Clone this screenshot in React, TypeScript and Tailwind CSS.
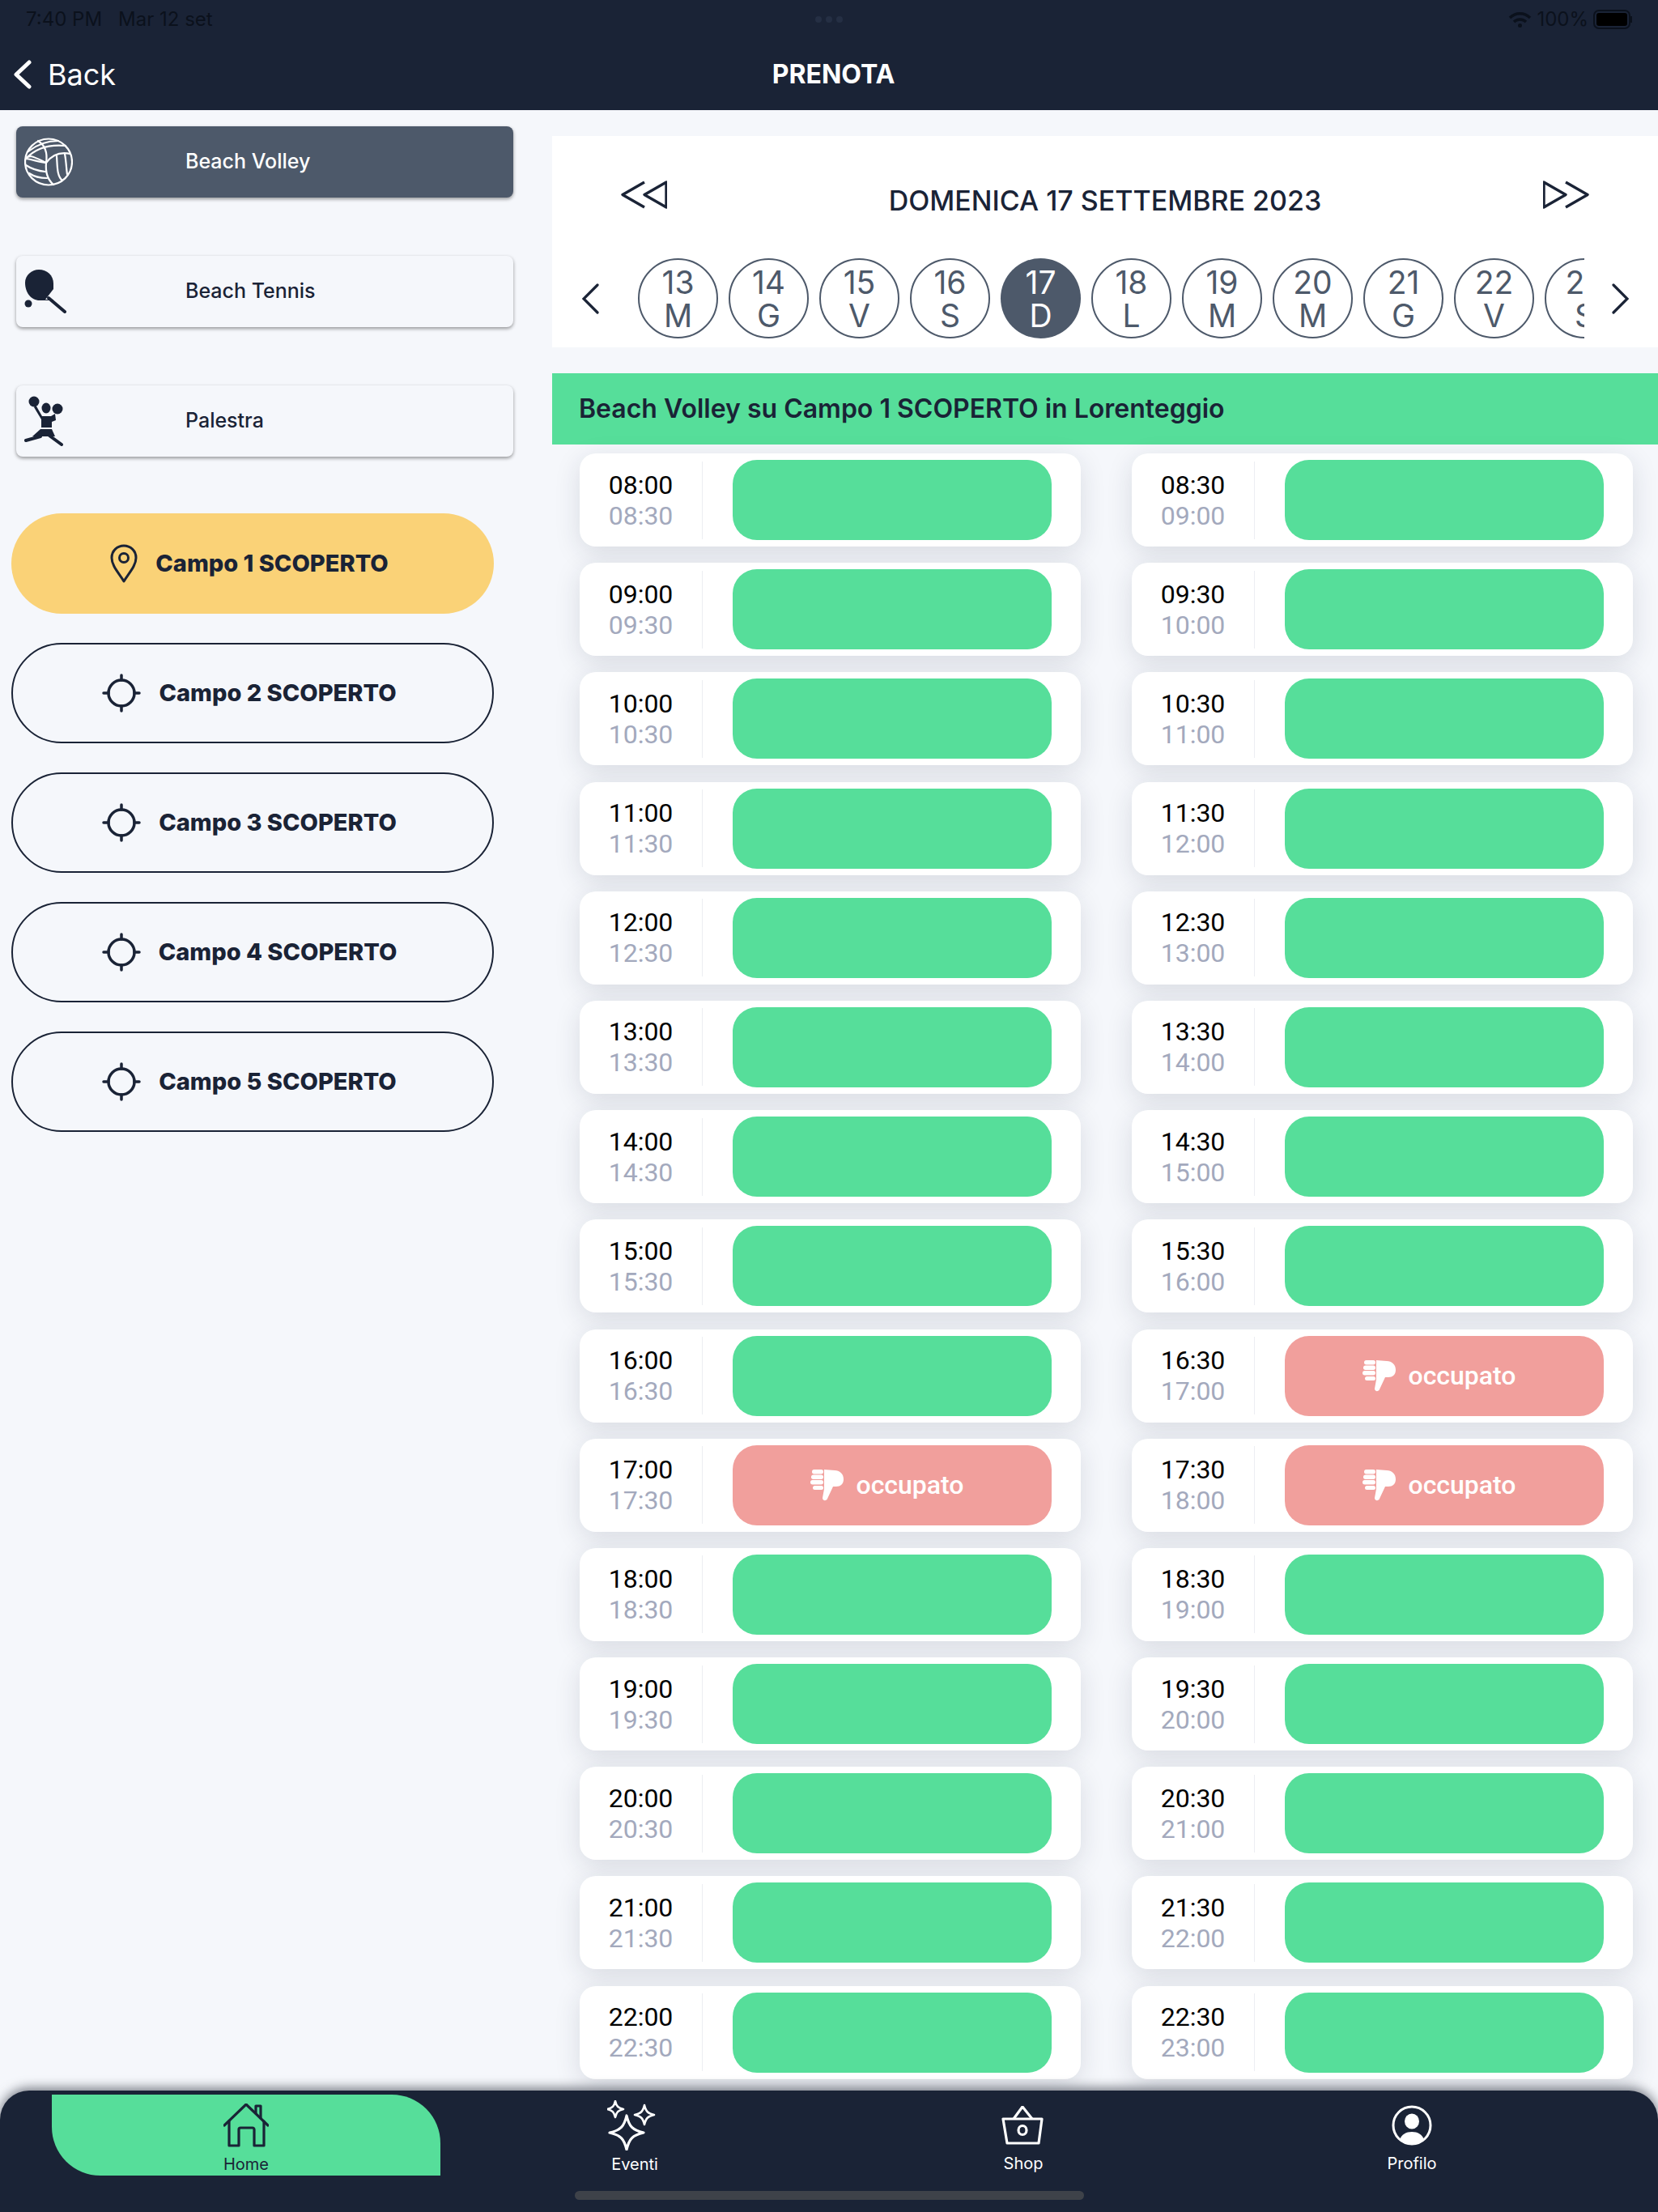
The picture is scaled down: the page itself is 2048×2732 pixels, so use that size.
import { ReactNode } from 'react'

const navy = '#1a2336'

interface Sport {
  label: string
  active?: boolean
  icon: ReactNode
}

function BallIcon() {
  return (
    <svg width="60" height="60" viewBox="0 0 60 60" fill="none" stroke="#fff" strokeWidth="2.2" strokeLinecap="round">
      <ellipse cx="30" cy="30" rx="29" ry="28.5" />
      <path d="M27 31C33 23 43 17 57 20" />
      <path d="M5 17C15 9 28 4 42 4" />
      <path d="M2 26C13 14 30 8 51 10" />
      <path d="M27 31C29 18 25 9 17 4" />
      <path d="M27 31C12 24 6 20 2 26" />
      <path d="M27 31C26 42 29 52 36 58" />
      <path d="M40 23C41 35 40 47 47 53" />
      <path d="M50 20C52 31 52 40 53 45" />
      <path d="M27 31C18 30 10 27 2 26" />
      <path d="M26 42C16 41 8 38 2 34" />
      <path d="M28 50C20 50 12 48 6 44" />
    </svg>
  )
}

function RacketIcon() {
  return (
    <svg width="52" height="54" viewBox="0 0 52 54" fill={navy}>
      <path d="M1 16C1 7 9 0 18 0C28 0 36 7 36 17V38H19C8 38 1 28 1 16Z" />
      <path d="M36 24V37H26Z" fill="#f5f7fb" />
      <path d="M30 35L50 52" stroke={navy} strokeWidth="4" strokeLinecap="round" />
      <circle cx="5" cy="42" r="4.5" />
    </svg>
  )
}

function CheerIcon() {
  return (
    <svg width="50" height="62" viewBox="0 0 50 62" fill={navy}>
      <circle cx="12" cy="7" r="6.5" />
      <circle cx="41" cy="16" r="6.5" />
      <ellipse cx="27" cy="15" rx="5.5" ry="6.5" />
      <path d="M14 11L22 25H33L38 22L39 30L34 32V39H21V29L12 14Z" />
      <path d="M20 41H34L38 50H10Z" />
      <path d="M20 50L2 55" stroke={navy} strokeWidth="4" strokeLinecap="round" fill="none" />
      <path d="M31 49L46 60" stroke={navy} strokeWidth="4" strokeLinecap="round" fill="none" />
    </svg>
  )
}

function PinIcon() {
  return (
    <svg width="34" height="48" viewBox="0 0 34 48" fill="none" stroke={navy} strokeWidth="3">
      <path d="M17 46C11 36 2 27 2 17C2 8 9 2 17 2C25 2 32 8 32 17C32 27 23 36 17 46Z" strokeLinejoin="round" />
      <ellipse cx="17" cy="17" rx="5.5" ry="5.5" />
    </svg>
  )
}

function TargetIcon() {
  return (
    <svg width="48" height="48" viewBox="0 0 48 48" fill="none" stroke={navy} strokeWidth="3.5" strokeLinecap="round">
      <circle cx="24" cy="24" r="16" />
      <path d="M24 2V8M24 40V46M2 24H8M40 24H46" />
    </svg>
  )
}

function ThumbDown() {
  return (
    <svg width="41" height="39" viewBox="0 0 41 39" fill="#fff">
      <rect x="2" y="0" width="14" height="5.5" rx="2.7" />
      <rect x="1" y="6.5" width="15" height="5.5" rx="2.7" />
      <rect x="0" y="13" width="16" height="5.5" rx="2.7" />
      <rect x="3" y="20" width="13" height="5" rx="2.5" />
      <path d="M17 0L30 1C36 1 41 5 41 12C41 18 37 21 32 21H28L21 36C20 39 15 39 15 35L17 24Z" />
    </svg>
  )
}

function HomeIcon() {
  return (
    <svg width="56" height="54" viewBox="0 0 56 54" fill="none" stroke={navy} strokeWidth="3.2" strokeLinecap="round" strokeLinejoin="round">
      <path d="M1 27L28 1L55 27" />
      <path d="M7 22V52H19V32C19 30 20 30 21 30H36C37 30 38 31 38 32V52H50V22" />
      <path d="M40 12V3H46V18" />
    </svg>
  )
}

function SparkleIcon() {
  const star = (x: number, y: number, r: number, w: number) => (
    <path
      d={`M${x} ${y - r}C${x + r * 0.15} ${y - r * 0.35} ${x + r * 0.35} ${y - r * 0.15} ${x + r} ${y}C${x + r * 0.35} ${y + r * 0.15} ${x + r * 0.15} ${y + r * 0.35} ${x} ${y + r}C${x - r * 0.15} ${y + r * 0.35} ${x - r * 0.35} ${y + r * 0.15} ${x - r} ${y}C${x - r * 0.35} ${y - r * 0.15} ${x - r * 0.15} ${y - r * 0.35} ${x} ${y - r}Z`}
      strokeWidth={w}
    />
  )
  return (
    <svg width="62" height="62" viewBox="0 0 62 62" fill="none" stroke="#fff" strokeLinejoin="round">
      {star(24, 40, 21, 3.2)}
      {star(10, 11, 10, 2.6)}
      {star(46, 18, 12, 2.6)}
    </svg>
  )
}

function ShopIcon() {
  return (
    <svg width="54" height="48" viewBox="0 0 54 48" fill="none" stroke="#fff" strokeWidth="3.2" strokeLinejoin="round">
      <path d="M15 16L26 1L38 16" />
      <path d="M2 16H50L46 46H7Z" />
      <ellipse cx="26" cy="30" rx="5" ry="5.5" />
    </svg>
  )
}

function ProfileIcon() {
  return (
    <svg width="50" height="50" viewBox="0 0 50 50" fill="none">
      <circle cx="25" cy="25" r="23" stroke="#fff" strokeWidth="3" />
      <ellipse cx="25" cy="20" rx="9" ry="9.5" fill="#fff" />
      <path d="M10 43C12 36 18 33 25 33C32 33 38 36 40 43C36 47 31 48 25 48C19 48 14 47 10 43Z" fill="#fff" />
    </svg>
  )
}

const sports: Sport[] = [
  { label: 'Beach Volley', active: true, icon: <BallIcon /> },
  { label: 'Beach Tennis', icon: <RacketIcon /> },
  { label: 'Palestra', icon: <CheerIcon /> },
]

const campi = [1, 2, 3, 4, 5]

const days = [
  ['13', 'M'],
  ['14', 'G'],
  ['15', 'V'],
  ['16', 'S'],
  ['17', 'D'],
  ['18', 'L'],
  ['19', 'M'],
  ['20', 'M'],
  ['21', 'G'],
  ['22', 'V'],
  ['23', 'S'],
]

const hours = [8, 9, 10, 11, 12, 13, 14, 15, 16, 17, 18, 19, 20, 21, 22]
const busy = ['16:30', '17:00', '17:30']

const pad = (n: number) => (n < 10 ? `0${n}` : `${n}`)

function Slot({ from, to }: { from: string; to: string }) {
  const occupied = busy.includes(from)
  return (
    <div className="flex h-[115px] items-center rounded-[20px] bg-white shadow-[0_8px_32px_rgba(30,35,60,0.13)]">
      <div className="flex h-[96px] w-[152px] shrink-0 flex-col items-center justify-center border-r border-[#eceef2] pl-[0px] font-['Roboto',sans-serif] text-[32px] leading-[38px]">
        <span className="pl-[0px] text-black">{from}</span>
        <span className="text-[#a3a9bd]">{to}</span>
      </div>
      {occupied ? (
        <div className="ml-[37px] mr-[36px] flex h-[99px] flex-1 items-center justify-center gap-[15px] rounded-[30px] bg-[#f19f9c] pr-[12px]">
          <ThumbDown />
          <span className="font-['Roboto',sans-serif] text-[32px] font-medium text-white">occupato</span>
        </div>
      ) : (
        <div className="ml-[37px] mr-[36px] h-[99px] flex-1 rounded-[30px] bg-[#56de9a]" />
      )}
    </div>
  )
}

export default function App() {
  return (
    <div className="flex h-[2732px] w-[2048px] flex-col overflow-hidden bg-[#f5f7fb] font-['Inter',sans-serif]">
      {/* Header */}
      <header className="h-[136px] shrink-0 bg-[#1a2336]">
        <div className="grid h-[48px] grid-cols-3 items-center px-[32px] text-[24px] text-[#0b111c]">
          <div className="flex gap-[20px]">
            <span>7:40 PM</span>
            <span>Mar 12 set</span>
          </div>
          <div className="flex justify-center gap-[5px]">
            <span className="h-[8px] w-[8px] rounded-full bg-[#252f44]" />
            <span className="h-[8px] w-[8px] rounded-full bg-[#252f44]" />
            <span className="h-[8px] w-[8px] rounded-full bg-[#252f44]" />
          </div>
          <div className="flex items-center justify-end gap-[6px]">
            <svg width="29" height="21" viewBox="0 0 29 21" fill="none" stroke="#0b111c" strokeWidth="3.4">
              <path d="M2 8C9 1 20 1 27 8" />
              <path d="M7 13C11 9 18 9 22 13" />
              <circle cx="14.5" cy="17.5" r="2.5" fill="#0b111c" stroke="none" />
            </svg>
            <span>100%</span>
            <div className="flex items-center">
              <div className="h-[24px] w-[46px] rounded-[7px] border-2 border-[#0b111c] p-[2px]">
                <div className="h-full w-full rounded-[3px] bg-black" />
              </div>
              <div className="h-[8px] w-[2px] bg-[#0b111c]" />
            </div>
          </div>
        </div>
        <div className="grid h-[88px] grid-cols-3 items-center pl-[17px]">
          <div className="flex items-center gap-[20px] text-[36px] text-white">
            <svg width="22" height="36" viewBox="0 0 22 36" fill="none" stroke="#fff" strokeWidth="5" strokeLinecap="round" strokeLinejoin="round">
              <path d="M19 3L3 18L19 33" />
            </svg>
            <span>Back</span>
          </div>
          <div className="pr-[6px] text-center text-[32px] font-bold text-white">PRENOTA</div>
        </div>
      </header>

      <div className="flex min-h-0 flex-1">
        {/* Sidebar */}
        <aside className="w-[682px] shrink-0 pt-[20px]">
          <div className="ml-[20px] flex w-[614px] flex-col gap-[72px]">
            {sports.map((sport) => (
              <div
                key={sport.label}
                className={`flex h-[88px] items-center rounded-[8px] shadow-[0_2px_4px_rgba(0,0,0,0.4)] ${
                  sport.active ? 'bg-[#4d596a] text-white' : 'bg-[#f5f7fb] text-[#1a2336]'
                }`}
              >
                <div className="flex w-[209px] shrink-0 justify-start pl-[10px]">{sport.icon}</div>
                <span className="text-[25px] font-medium">{sport.label}</span>
              </div>
            ))}
          </div>
          <div className="ml-[14px] mt-[70px] flex w-[596px] flex-col gap-[36px]">
            {campi.map((n) => (
              <div
                key={n}
                className={`flex h-[124px] items-center justify-center gap-[22px] rounded-full pr-[8px] text-[29px] font-extrabold text-[#1a2336] ${
                  n === 1 ? 'bg-[#fad277]' : 'border-2 border-[#1a2336]'
                }`}
              >
                {n === 1 ? <PinIcon /> : <TargetIcon />}
                <span>Campo {n} SCOPERTO</span>
              </div>
            ))}
          </div>
        </aside>

        {/* Main */}
        <main className="min-w-0 flex-1 pt-[32px]">
          <div className="h-[261px] bg-white pt-[55px]">
            <div className="mb-[61px] flex h-[35px] items-start px-[85px]">
              <svg width="57" height="35" viewBox="0 0 57 35" fill="none" stroke={navy} strokeWidth="3.4" strokeLinejoin="round">
                <path d="M29 2L2 17.5L29 33" />
                <path d="M56 2L29 17.5L56 33Z" />
              </svg>
              <div className="mt-[5px] flex-1 text-center text-[34px] font-medium leading-[40px] text-[#1a2336]">
                DOMENICA 17 SETTEMBRE 2023
              </div>
              <svg width="57" height="35" viewBox="0 0 57 35" fill="none" stroke={navy} strokeWidth="3.4" strokeLinejoin="round">
                <path d="M28 2L55 17.5L28 33" />
                <path d="M1 2L28 17.5L1 33Z" />
              </svg>
            </div>
            <div className="flex items-center pl-[37px]">
              <svg width="21" height="38" viewBox="0 0 21 38" fill="none" stroke={navy} strokeWidth="3.2" strokeLinecap="round">
                <path d="M19 2L2 19L19 36" />
              </svg>
              <div className="ml-[48px] flex w-[1169px] shrink-0 gap-[13px] overflow-hidden">
                {days.map(([num, letter]) => (
                  <div
                    key={num}
                    className={`flex h-[99px] w-[99px] shrink-0 flex-col items-center justify-center rounded-full text-[39px] leading-[41px] ${
                      num === '17' ? 'bg-[#4d596a] text-white' : 'border-2 border-[#4d596a] text-[#4d596a]'
                    }`}
                  >
                    <span>{num}</span>
                    <span>{letter}</span>
                  </div>
                ))}
              </div>
              <svg className="ml-[34px]" width="21" height="38" viewBox="0 0 21 38" fill="none" stroke={navy} strokeWidth="3.2" strokeLinecap="round">
                <path d="M2 2L19 19L2 36" />
              </svg>
            </div>
          </div>

          <div className="mt-[32px] flex h-[88px] items-center bg-[#56de9a] pl-[33px] text-[32px] font-semibold text-[#1a2336]">
            Beach Volley su Campo 1 SCOPERTO in Lorenteggio
          </div>

          <div className="grid grid-cols-2 gap-x-[63px] gap-y-[20.2px] pl-[34px] pr-[31px] pt-[11px]">
            {hours.map((h) => (
              <div key={h} className="contents">
                <Slot from={`${pad(h)}:00`} to={`${pad(h)}:30`} />
                <Slot from={`${pad(h)}:30`} to={`${pad(h + 1)}:00`} />
              </div>
            ))}
          </div>
        </main>
      </div>

      {/* Tab bar */}
      <nav className="relative h-[150px] shrink-0 rounded-t-[36px] bg-[#1a2336] px-[64px] pt-[5px] shadow-[0_-3px_14px_rgba(10,15,30,0.55)]">
        <div className="grid grid-cols-4 text-[20px] text-white">
          <div className="flex h-[100px] flex-col items-center rounded-bl-[60px] rounded-tr-[60px] bg-[#56de9a] pt-[11px] text-[#1a2336]">
            <div className="flex h-[54px] items-center">
              <HomeIcon />
            </div>
            <span className="mt-[6px]">Home</span>
          </div>
          <div className="flex h-[100px] flex-col items-center pt-[11px]">
            <div className="flex h-[54px] items-center pr-[6px]">
              <SparkleIcon />
            </div>
            <span className="mt-[6px]">Eventi</span>
          </div>
          <div className="flex h-[100px] flex-col items-center pt-[11px]">
            <div className="flex h-[54px] items-center">
              <ShopIcon />
            </div>
            <span className="mt-[6px]">Shop</span>
          </div>
          <div className="flex h-[100px] flex-col items-center pt-[11px]">
            <div className="flex h-[54px] items-center">
              <ProfileIcon />
            </div>
            <span className="mt-[6px]">Profilo</span>
          </div>
        </div>
        <div className="mx-auto mt-[19px] h-[11px] w-[629px] rounded-full bg-[#3e4249]" />
      </nav>
    </div>
  )
}
